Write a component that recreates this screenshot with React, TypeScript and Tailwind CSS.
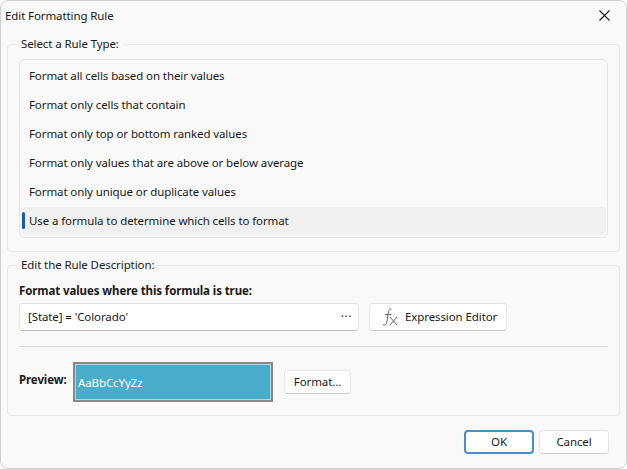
import React from "react";

const rules = [
  "Format all cells based on their values",
  "Format only cells that contain",
  "Format only top or bottom ranked values",
  "Format only values that are above or below average",
  "Format only unique or duplicate values",
];

function Btn({ children, className = "" }: { children: React.ReactNode; className?: string }) {
  return (
    <button className={"flex items-center justify-center rounded-[4px] border border-[#e5e5e5] border-b-[#cccccc] bg-white text-[11.5px] tracking-[-0.1px] text-[#1a1a1a] " + className}>
      {children}
    </button>
  );
}

export default function App() {
  return (
    <div className="h-[469px] w-[627px] overflow-hidden bg-white font-['Noto_Sans','Open_Sans',sans-serif] text-[11.5px] tracking-[-0.1px] text-[#1a1a1a]">
      <div className="flex h-[469px] w-[627px] flex-col rounded-[8px] border border-[#cfcfcf] bg-[#f9f9f9] px-[6px]">
        <div className="flex h-[35px] shrink-0 items-center justify-between pr-[10px]">
          <span className="-ml-[2px] -mt-[5px]">Edit Formatting Rule</span>
          <svg className="-mt-[6px]" width="11" height="11" viewBox="0 0 11 11" fill="none" stroke="#1a1a1a" strokeWidth="1.1">
            <path d="M0.5 0.5 L10.5 10.5 M10.5 0.5 L0.5 10.5" />
          </svg>
        </div>

        <fieldset className="h-[216px] shrink-0 rounded-[4px] border border-[#e8e8e8] px-[11px]">
          <legend className="-ml-[2px] px-[4px] leading-[16px]">Select a Rule Type:</legend>
          <div className="mt-[7px] flex h-[179px] flex-col rounded-[6px] border border-[#e5e5e5] p-[1px]">
            {rules.map((r) => (
              <div key={r} className="flex h-[29px] shrink-0 items-center pl-[8px] pt-[1px]">{r}</div>
            ))}
            <div className="relative mt-[1px] flex h-[28px] items-center rounded-[4px] bg-[#f0f0f0] pl-[8px]">
              <span className="absolute left-[1px] top-[5px] h-[17px] w-[3px] rounded-[2px] bg-[#0f5cb0]" />
              Use a formula to determine which cells to format
            </div>
          </div>
        </fieldset>

        <fieldset className="mt-[5px] h-[159px] shrink-0 rounded-[4px] border border-[#e8e8e8] px-[11px]">
          <legend className="-ml-[2px] px-[4px] leading-[16px]">Edit the Rule Description:</legend>
          <div className="mt-[10px] font-bold leading-[16px]">Format values where this formula is true:</div>
          <div className="mt-[4px] flex h-[28px] gap-[10px]">
            <div className="flex w-[340px] items-center justify-between rounded-[4px] border border-[#e5e5e5] border-b-[#bdbdbd] bg-white pl-[8px] pr-[6px]">
              <span>[State] = 'Colorado'</span>
              <span className="text-[12px] leading-none tracking-[0.5px] text-[#333]">···</span>
            </div>
            <Btn className="w-[138px] gap-[7px] !justify-start pl-[12px]">
              <svg width="16" height="18" viewBox="0 0 16 18" fill="none" stroke="#666666" strokeWidth="1">
                <path d="M9.5 1.2 C7.6 0.6 6.8 1.8 6.5 3.5 L4.8 14.5 C4.5 16.5 3.2 17.5 1 16.6" />
                <path d="M3 6.5 H9.5" />
                <path d="M8 9 L15 17 M15 9 L8 17" />
              </svg>
              <span>Expression Editor</span>
            </Btn>
          </div>
          <div className="mt-[15px] h-px bg-[#dcdcdc]" />
          <div className="mt-[15px] flex items-center">
            <span className="mb-[4px] w-[54px] font-bold">Preview:</span>
            <div className="flex h-[40px] w-[200px] items-center border-[2px] border-[#8c8686] bg-[#49acc8] pl-[3px] pt-[1px] text-white outline outline-[1px] -outline-offset-[3px] outline-[#a5dcea]">
              AaBbCcYyZz
            </div>
            <Btn className="ml-[11px] h-[24px] w-[67px]">Format...</Btn>
          </div>
        </fieldset>

        <div className="mt-[14px] flex justify-end gap-[5px] pr-[11px]">
          <button className="flex h-[24px] w-[70px] items-center justify-center rounded-[4px] border-[2px] border-[#4a8ed0] bg-white">OK</button>
          <Btn className="h-[24px] w-[70px]">Cancel</Btn>
        </div>
      </div>
    </div>
  );
}
